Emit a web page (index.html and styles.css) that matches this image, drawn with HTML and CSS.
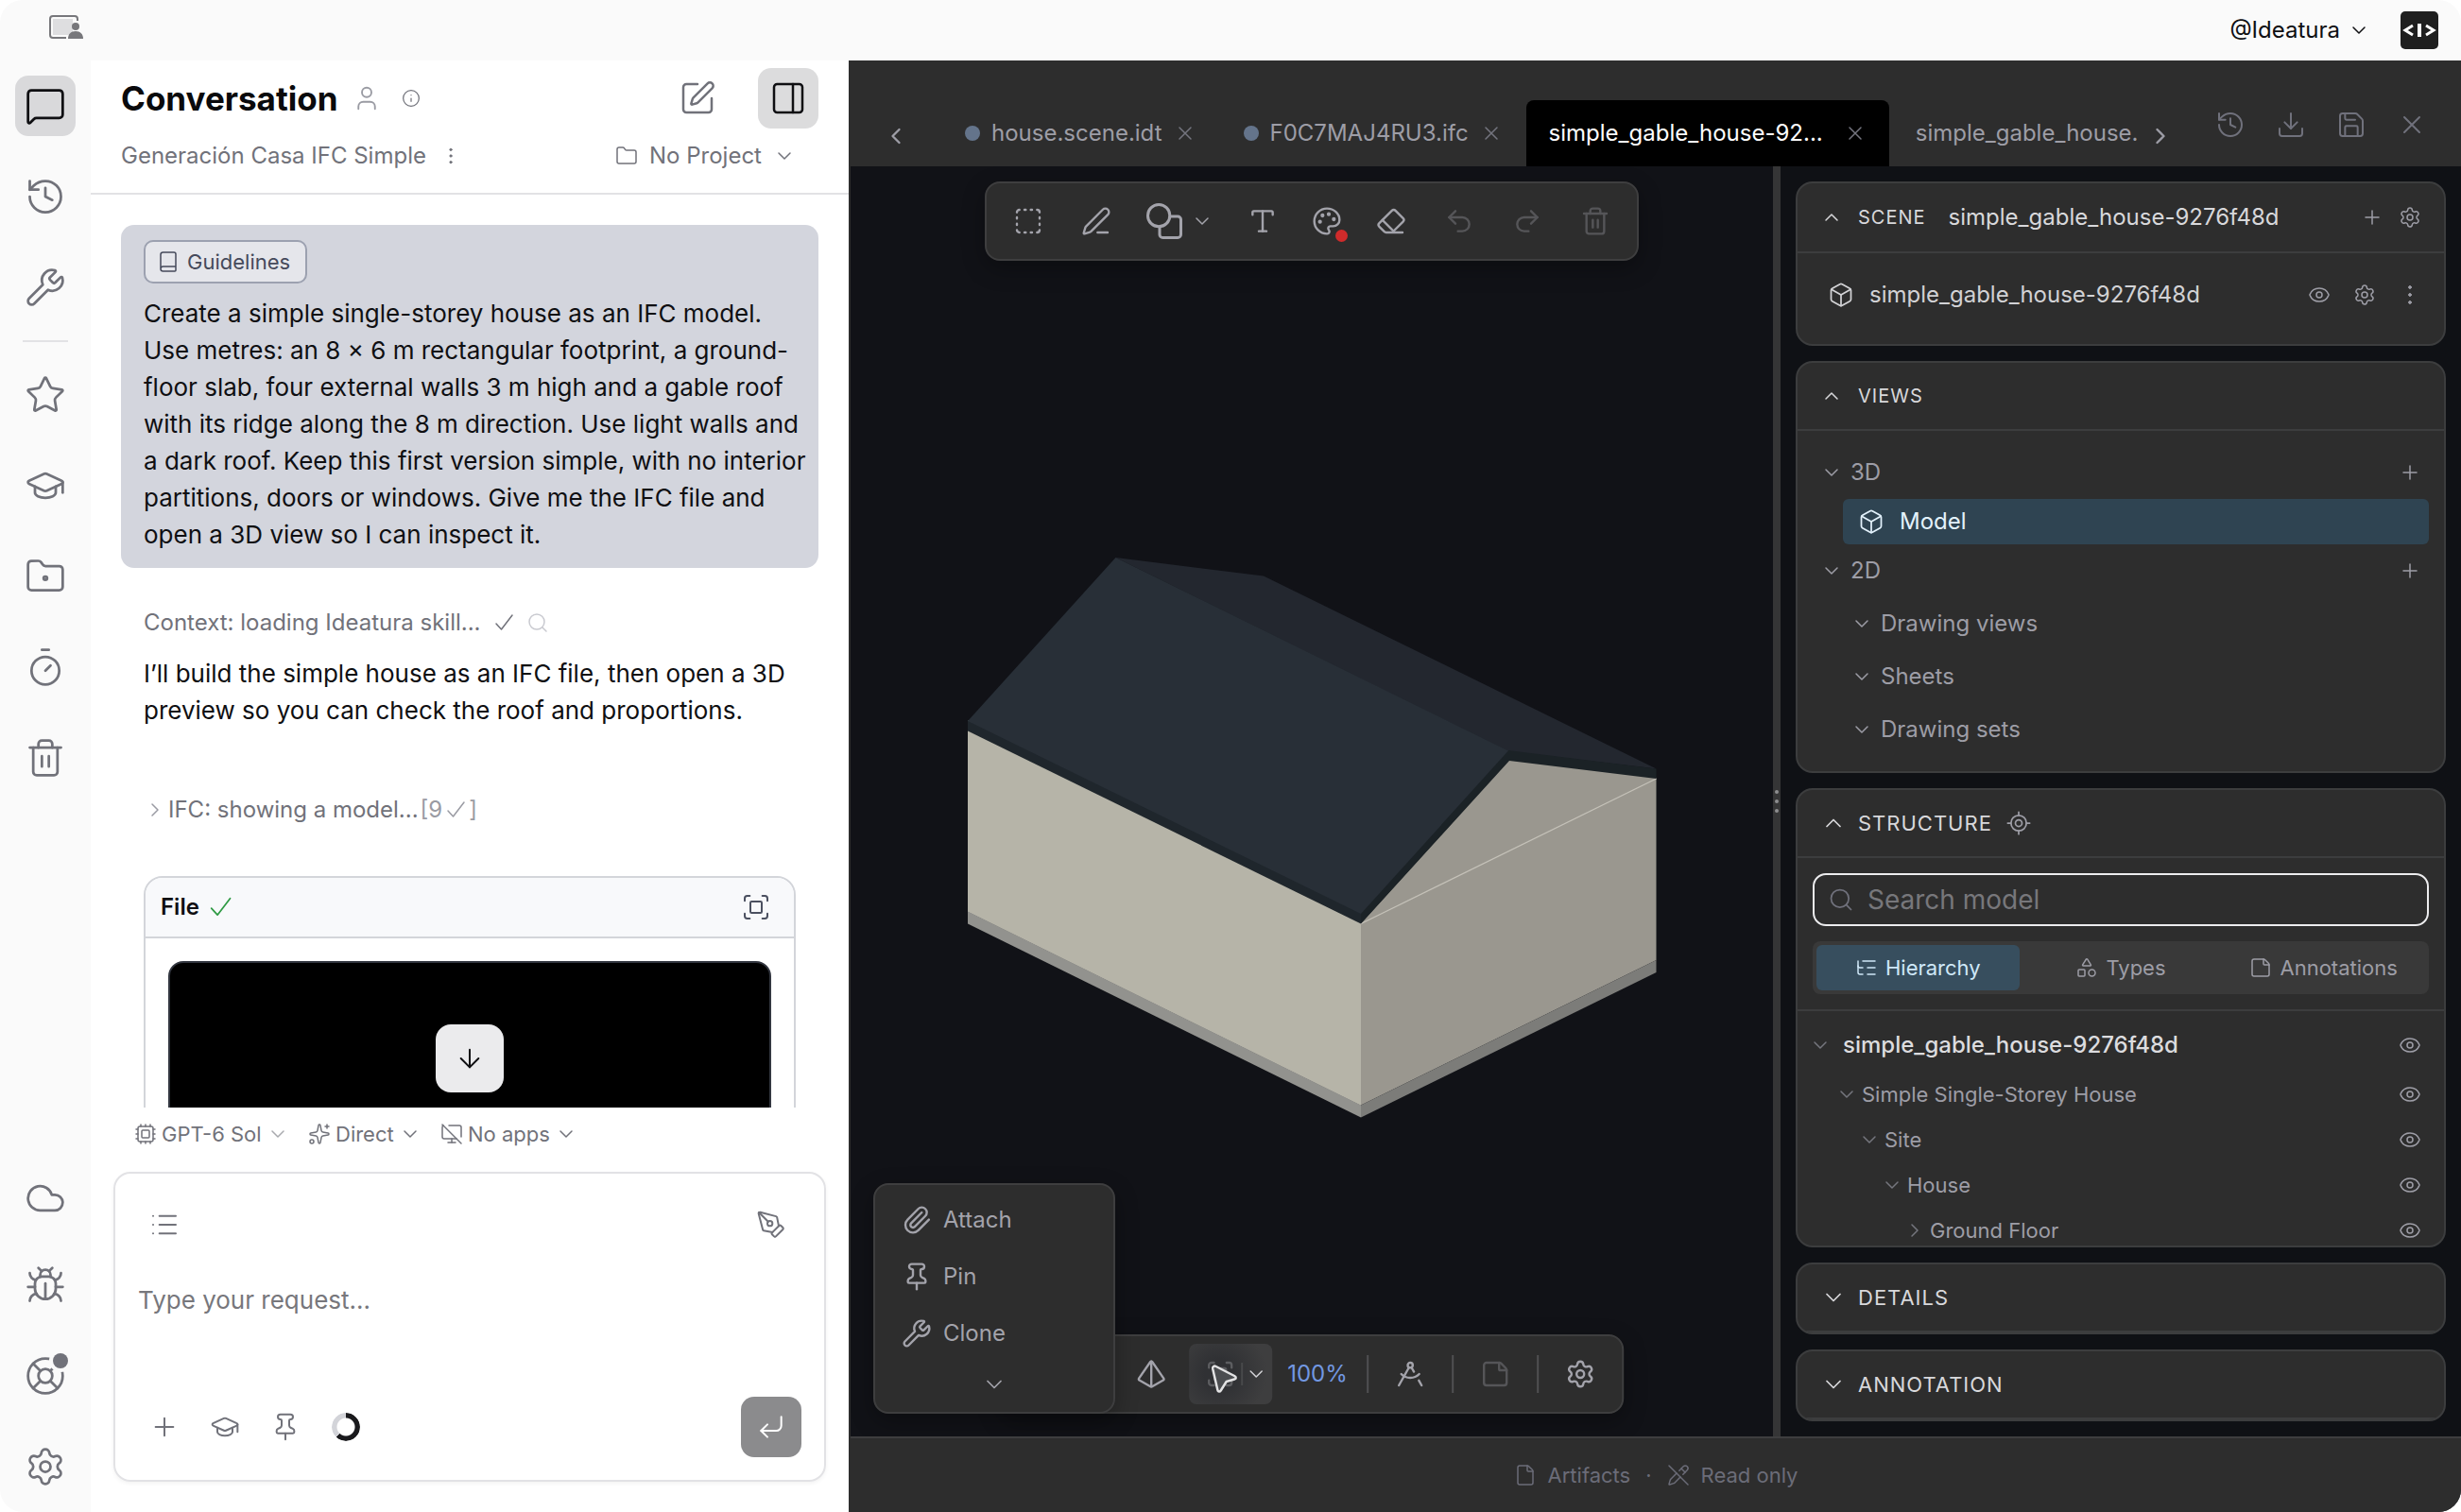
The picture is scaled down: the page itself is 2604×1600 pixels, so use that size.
FILE: index.html
```html
<!DOCTYPE html>
<html lang="en">
<head>
<meta charset="utf-8">
<meta name="viewport" content="width=device-width, initial-scale=1">
<title>Ideatura</title>
<link rel="stylesheet" href="styles.css">
</head>
<body>
<svg class="sprite" aria-hidden="true">
  <symbol id="message" viewBox="0 0 24 24"><path d="M22 17a2 2 0 0 1-2 2H6.828a2 2 0 0 0-1.414.586l-2.202 2.202A.71.71 0 0 1 2 21.286V5a2 2 0 0 1 2-2h16a2 2 0 0 1 2 2z"/></symbol>
  <symbol id="history" viewBox="0 0 24 24"><path d="M3 12a9 9 0 1 0 9-9 9.75 9.75 0 0 0-6.74 2.74L3 8"/><path d="M3 3v5h5"/><path d="M12 7v5l4 2"/></symbol>
  <symbol id="wrench" viewBox="0 0 24 24"><path d="M14.7 6.3a1 1 0 0 0 0 1.4l1.6 1.6a1 1 0 0 0 1.4 0l3.106-3.105c.32-.322.863-.22.983.218a6 6 0 0 1-8.259 7.057l-7.91 7.91a1 1 0 0 1-2.999-3l7.91-7.91a6 6 0 0 1 7.057-8.259c.438.12.54.662.219.984z"/></symbol>
  <symbol id="star" viewBox="0 0 24 24"><path d="M11.525 2.295a.53.53 0 0 1 .95 0l2.31 4.679a2.123 2.123 0 0 0 1.595 1.16l5.166.756a.53.53 0 0 1 .294.904l-3.736 3.638a2.123 2.123 0 0 0-.611 1.878l.882 5.14a.53.53 0 0 1-.771.56l-4.618-2.428a2.122 2.122 0 0 0-1.973 0L6.396 21.01a.53.53 0 0 1-.77-.56l.881-5.139a2.122 2.122 0 0 0-.611-1.879L2.16 9.795a.53.53 0 0 1 .294-.906l5.165-.755a2.122 2.122 0 0 0 1.597-1.16z"/></symbol>
  <symbol id="cap" viewBox="0 0 24 24"><path d="M21.42 10.922a1 1 0 0 0-.019-1.838L12.83 5.18a2 2 0 0 0-1.66 0L2.6 9.08a1 1 0 0 0 0 1.832l8.57 3.908a2 2 0 0 0 1.66 0z"/><path d="M22 10v6"/><path d="M6 12.5V16a6 3 0 0 0 12 0v-3.5"/></symbol>
  <symbol id="folder-dot" viewBox="0 0 24 24"><path d="M4 20h16a2 2 0 0 0 2-2V8a2 2 0 0 0-2-2h-7.93a2 2 0 0 1-1.66-.9l-.82-1.2A2 2 0 0 0 7.93 3H4a2 2 0 0 0-2 2v13c0 1.1.9 2 2 2Z"/><circle cx="12" cy="13" r="1"/></symbol>
  <symbol id="timer" viewBox="0 0 24 24"><path d="M10 2h4"/><path d="m12 14 3-3"/><circle cx="12" cy="14" r="8"/></symbol>
  <symbol id="trash" viewBox="0 0 24 24"><path d="M3 6h18"/><path d="M19 6v14a2 2 0 0 1-2 2H7a2 2 0 0 1-2-2V6"/><path d="M8 6V4a2 2 0 0 1 2-2h4a2 2 0 0 1 2 2v2"/><path d="M10 11v6M14 11v6"/></symbol>
  <symbol id="cloud" viewBox="0 0 24 24"><path d="M17.5 19H9a7 7 0 1 1 6.71-9h1.79a4.5 4.5 0 1 1 0 9Z"/></symbol>
  <symbol id="bug" viewBox="0 0 24 24"><path d="M12 20v-9"/><path d="M14 7a4 4 0 0 1 4 4v3a6 6 0 0 1-12 0v-3a4 4 0 0 1 4-4z"/><path d="M14.12 3.88 16 2"/><path d="M21 21a4 4 0 0 0-3.81-4"/><path d="M21 5a4 4 0 0 1-3.55 3.97"/><path d="M22 13h-4"/><path d="M3 21a4 4 0 0 1 3.81-4"/><path d="M3 5a4 4 0 0 0 3.55 3.97"/><path d="M6 13H2"/><path d="m8 2 1.88 1.88"/><path d="M9 7.13V6a3 3 0 1 1 6 0v1.13"/></symbol>
  <symbol id="buoy" viewBox="0 0 24 24"><circle cx="12" cy="12" r="10"/><path d="m4.93 4.93 4.24 4.24"/><path d="m14.83 9.17 4.24-4.24"/><path d="m14.83 14.83 4.24 4.24"/><path d="m9.17 14.83-4.24 4.24"/><circle cx="12" cy="12" r="4"/></symbol>
  <symbol id="gear" viewBox="0 0 24 24"><path d="M9.671 4.136a2.34 2.34 0 0 1 4.659 0 2.34 2.34 0 0 0 3.319 1.915 2.34 2.34 0 0 1 2.33 4.033 2.34 2.34 0 0 0 0 3.831 2.34 2.34 0 0 1-2.33 4.033 2.34 2.34 0 0 0-3.319 1.915 2.34 2.34 0 0 1-4.659 0 2.34 2.34 0 0 0-3.32-1.915 2.34 2.34 0 0 1-2.33-4.033 2.34 2.34 0 0 0 0-3.831A2.34 2.34 0 0 1 6.35 6.051a2.34 2.34 0 0 0 3.319-1.915"/><circle cx="12" cy="12" r="3"/></symbol>
  <symbol id="square-pen" viewBox="0 0 24 24"><path d="M12 3H5a2 2 0 0 0-2 2v14a2 2 0 0 0 2 2h14a2 2 0 0 0 2-2v-7"/><path d="M18.375 2.625a1 1 0 0 1 3 3l-9.013 9.014a2 2 0 0 1-.853.505l-2.873.84a.5.5 0 0 1-.62-.62l.84-2.873a2 2 0 0 1 .506-.852z"/></symbol>
  <symbol id="panel" viewBox="0 0 24 24"><rect x="3" y="3" width="18" height="18" rx="2"/><path d="M15 3v18"/></symbol>
  <symbol id="user" viewBox="0 0 24 24"><path d="M19 21v-2a4 4 0 0 0-4-4H9a4 4 0 0 0-4 4v2"/><circle cx="12" cy="7" r="4"/></symbol>
  <symbol id="info" viewBox="0 0 24 24"><circle cx="12" cy="12" r="10"/><path d="M12 16v-4M12 8h.01"/></symbol>
  <symbol id="dots" viewBox="0 0 24 24"><g fill="currentColor" stroke-width="1"><circle cx="12" cy="4" r="1.4"/><circle cx="12" cy="12" r="1.4"/><circle cx="12" cy="20" r="1.4"/></g></symbol>
  <symbol id="down" viewBox="0 0 24 24"><path d="m6 9 6 6 6-6"/></symbol>
  <symbol id="up" viewBox="0 0 24 24"><path d="m6 15 6-6 6 6"/></symbol>
  <symbol id="right" viewBox="0 0 24 24"><path d="m9 18 6-6-6-6"/></symbol>
  <symbol id="left" viewBox="0 0 24 24"><path d="m15 18-6-6 6-6"/></symbol>
  <symbol id="folder" viewBox="0 0 24 24"><path d="M20 20a2 2 0 0 0 2-2V8a2 2 0 0 0-2-2h-7.9a2 2 0 0 1-1.69-.9L9.6 3.9A2 2 0 0 0 7.93 3H4a2 2 0 0 0-2 2v13a2 2 0 0 0 2 2Z"/></symbol>
  <symbol id="book" viewBox="0 0 24 24"><path d="M4 19.5v-15A2.5 2.5 0 0 1 6.5 2H18a2 2 0 0 1 2 2v17a1 1 0 0 1-1 1H6.5a2.5 2.5 0 0 1 0-5H20"/></symbol>
  <symbol id="check" viewBox="0 0 24 24"><path d="M21 4 9.500 19 4 13"/></symbol>
  <symbol id="search" viewBox="0 0 24 24"><circle cx="11" cy="11" r="8"/><path d="m21 21-4.3-4.3"/></symbol>
  <symbol id="scan" viewBox="0 0 24 24"><path d="M3 7V5a2 2 0 0 1 2-2h2"/><path d="M17 3h2a2 2 0 0 1 2 2v2"/><path d="M21 17v2a2 2 0 0 1-2 2h-2"/><path d="M7 21H5a2 2 0 0 1-2-2v-2"/><rect x="7.500" y="7.500" width="9" height="9" rx="1"/></symbol>
  <symbol id="arrow-down" viewBox="0 0 24 24"><path d="M12 5v14"/><path d="m19 12-7 7-7-7"/></symbol>
  <symbol id="cpu" viewBox="0 0 24 24"><path d="M12 20v2M12 2v2M17 20v2M17 2v2M2 12h2M2 17h2M2 7h2M20 12h2M20 17h2M20 7h2M7 20v2M7 2v2"/><rect x="4" y="4" width="16" height="16" rx="2"/><rect x="8" y="8" width="8" height="8" rx="1"/></symbol>
  <symbol id="sparkles" viewBox="0 0 24 24"><path d="M11.017 2.814a1 1 0 0 1 1.966 0l1.051 5.558a2 2 0 0 0 1.594 1.594l5.558 1.051a1 1 0 0 1 0 1.966l-5.558 1.051a2 2 0 0 0-1.594 1.594l-1.051 5.558a1 1 0 0 1-1.966 0l-1.051-5.558a2 2 0 0 0-1.594-1.594l-5.558-1.051a1 1 0 0 1 0-1.966l5.558-1.051a2 2 0 0 0 1.594-1.594z"/><path d="M20 2v4M22 4h-4"/><circle cx="4" cy="20" r="2"/></symbol>
  <symbol id="monitor-off" viewBox="0 0 24 24"><path d="M17 17H4a2 2 0 0 1-2-2V5c0-1.500 1-2 1-2"/><path d="M22 15V5a2 2 0 0 0-2-2H9"/><path d="M8 21h8"/><path d="M12 17v4"/><path d="m2 2 20 20"/></symbol>
  <symbol id="list" viewBox="0 0 24 24"><path d="M3 5h.01M3 12h.01M3 19h.01M8 5h13M8 12h13M8 19h13"/></symbol>
  <symbol id="pen-tool" viewBox="0 0 24 24"><path d="M15.707 21.293a1 1 0 0 1-1.414 0l-1.586-1.586a1 1 0 0 1 0-1.414l5.586-5.586a1 1 0 0 1 1.414 0l1.586 1.586a1 1 0 0 1 0 1.414z"/><path d="m18 13-1.375-6.874a1 1 0 0 0-.746-.776L3.235 2.028a1 1 0 0 0-1.207 1.207L5.35 15.879a1 1 0 0 0 .776.746L13 18"/><path d="m2.300 2.300 7.286 7.286"/><circle cx="11" cy="11" r="2"/></symbol>
  <symbol id="plus" viewBox="0 0 24 24"><path d="M5 12h14M12 5v14"/></symbol>
  <symbol id="close" viewBox="0 0 24 24"><path d="M18 6 6 18M6 6l12 12"/></symbol>
  <symbol id="pin" viewBox="0 0 24 24"><path d="M12 17v5"/><path d="M9 10.760a2 2 0 0 1-1.110 1.790l-1.780.900A2 2 0 0 0 5 15.240V16a1 1 0 0 0 1 1h12a1 1 0 0 0 1-1v-.760a2 2 0 0 0-1.110-1.790l-1.780-.900A2 2 0 0 1 15 10.760V7a1 1 0 0 1 1-1 2 2 0 0 0 0-4H8a2 2 0 0 0 0 4 1 1 0 0 1 1 1z"/></symbol>
  <symbol id="enter" viewBox="0 0 24 24"><path d="M20 4v7a4 4 0 0 1-4 4H4"/><path d="m9 10-5 5 5 5"/></symbol>
  <symbol id="clip" viewBox="0 0 24 24"><path d="m16 6-8.414 8.586a2 2 0 0 0 2.829 2.829l8.414-8.586a4 4 0 1 0-5.657-5.657l-8.379 8.551a6 6 0 1 0 8.485 8.485l8.379-8.551"/></symbol>
  <symbol id="pyramid" viewBox="0 0 24 24"><path d="M2.500 16.880a1 1 0 0 1-.320-1.430l9-13.020a1 1 0 0 1 1.640 0l9 13.010a1 1 0 0 1-.320 1.440l-8.510 4.860a2 2 0 0 1-1.980 0Z"/><path d="M12 2v20"/></symbol>
  <symbol id="compass" viewBox="0 0 24 24"><path d="m12.990 6.740 1.930 3.440"/><path d="M19.136 12a10 10 0 0 1-14.271 0"/><path d="m21 21-2.160-3.840"/><path d="m3 21 8.020-14.260"/><circle cx="12" cy="5" r="2"/></symbol>
  <symbol id="note" viewBox="0 0 24 24"><path d="M21 9a2.400 2.400 0 0 0-.706-1.706l-3.588-3.588A2.400 2.400 0 0 0 15 3H5a2 2 0 0 0-2 2v14a2 2 0 0 0 2 2h14a2 2 0 0 0 2-2z"/><path d="M15 3v5a1 1 0 0 0 1 1h5"/></symbol>
  <symbol id="file" viewBox="0 0 24 24"><path d="M6 22a2 2 0 0 1-2-2V4a2 2 0 0 1 2-2h8a2.400 2.400 0 0 1 1.704.706l3.588 3.588A2.400 2.400 0 0 1 20 8v12a2 2 0 0 1-2 2z"/><path d="M14 2v5a1 1 0 0 0 1 1h5"/></symbol>
  <symbol id="box" viewBox="0 0 24 24"><path d="M21 8a2 2 0 0 0-1-1.730l-7-4a2 2 0 0 0-2 0l-7 4A2 2 0 0 0 3 8v8a2 2 0 0 0 1 1.730l7 4a2 2 0 0 0 2 0l7-4A2 2 0 0 0 21 16Z"/><path d="m3.300 7 8.700 5 8.700-5"/><path d="M12 22V12"/></symbol>
  <symbol id="eye" viewBox="0 0 24 24"><path d="M2.062 12.348a1 1 0 0 1 0-.696 10.750 10.750 0 0 1 19.876 0 1 1 0 0 1 0 .696 10.750 10.750 0 0 1-19.876 0"/><circle cx="12" cy="12" r="3"/></symbol>
  <symbol id="locate" viewBox="0 0 24 24"><path d="M2 12h3M19 12h3M12 2v3M12 19v3"/><circle cx="12" cy="12" r="7"/><circle cx="12" cy="12" r="3"/></symbol>
  <symbol id="tree" viewBox="0 0 24 24"><path d="M8 5h13M13 12h8M13 19h8"/><path d="M3 10a2 2 0 0 0 2 2h3"/><path d="M3 5v12a2 2 0 0 0 2 2h3"/></symbol>
  <symbol id="shapes" viewBox="0 0 24 24"><path d="M8.300 10a.700.700 0 0 1-.626-1.079L11.400 3a.700.700 0 0 1 1.198-.043L16.300 8.900a.700.700 0 0 1-.572 1.100Z"/><rect x="3" y="14" width="7" height="7" rx="1"/><circle cx="17.500" cy="17.500" r="3.500"/></symbol>
  <symbol id="pencil-off" viewBox="0 0 24 24"><path d="m10 10-6.157 6.162a2 2 0 0 0-.5.833l-1.322 4.360a.5.5 0 0 0 .622.624l4.358-1.323a2 2 0 0 0 .830-.5L14 13.982"/><path d="m12.829 7.172 4.359-4.346a1 1 0 1 1 3.986 3.986l-4.353 4.353"/><path d="m15 5 4 4"/><path d="m2 2 20 20"/></symbol>
  <symbol id="marquee" viewBox="0 0 24 24"><path d="M5 3a2 2 0 0 0-2 2M19 3a2 2 0 0 1 2 2M21 19a2 2 0 0 1-2 2M5 21a2 2 0 0 1-2-2M9 3h1M14 3h1M9 21h1M14 21h1M3 9v1M3 14v1M21 9v1M21 14v1"/></symbol>
  <symbol id="pen-line" viewBox="0 0 24 24"><path d="M13 21h8"/><path d="M21.174 6.812a1 1 0 0 0-3.986-3.987L3.842 16.174a2 2 0 0 0-.5.830l-1.321 4.352a.5.5 0 0 0 .623.622l4.353-1.320a2 2 0 0 0 .830-.497z"/></symbol>
  <symbol id="forms" viewBox="0 0 24 24"><circle cx="8.500" cy="8.500" r="7"/><path d="M15.500 9H20.500a2 2 0 0 1 2 2v9.500a2 2 0 0 1-2 2H11a2 2 0 0 1-2-2V15.500"/></symbol>
  <symbol id="type" viewBox="0 0 24 24"><path d="M12 4v16"/><path d="M4 7V5a1 1 0 0 1 1-1h14a1 1 0 0 1 1 1v2"/><path d="M9 20h6"/></symbol>
  <symbol id="palette" viewBox="0 0 24 24"><path d="M12 22a1 1 0 0 1 0-20 10 9 0 0 1 10 9 5 5 0 0 1-5 5h-2.250a1.750 1.750 0 0 0-1.400 2.800l.3.4a1.750 1.750 0 0 1-1.400 2.800z"/><g fill="currentColor"><circle cx="13.500" cy="6.500" r=".7"/><circle cx="17.500" cy="10.500" r=".7"/><circle cx="6.500" cy="12.500" r=".7"/><circle cx="8.500" cy="7.500" r=".7"/></g></symbol>
  <symbol id="eraser" viewBox="0 0 24 24"><path d="M21 21H8a2 2 0 0 1-1.420-.587l-3.994-3.999a2 2 0 0 1 0-2.828l10-10a2 2 0 0 1 2.829 0l5.999 6a2 2 0 0 1 0 2.828L12.834 21"/><path d="m5.082 11.090 8.828 8.828"/></symbol>
  <symbol id="undo" viewBox="0 0 24 24"><path d="M9 14 4 9l5-5"/><path d="M4 9h10.500a5.500 5.500 0 0 1 0 11H11"/></symbol>
  <symbol id="redo" viewBox="0 0 24 24"><path d="m15 14 5-5-5-5"/><path d="M20 9H9.500a5.500 5.500 0 0 0 0 11H13"/></symbol>
  <symbol id="download" viewBox="0 0 24 24"><path d="M12 15V3"/><path d="M21 15v4a2 2 0 0 1-2 2H5a2 2 0 0 1-2-2v-4"/><path d="m7 10 5 5 5-5"/></symbol>
  <symbol id="save" viewBox="0 0 24 24"><path d="M15.200 3a2 2 0 0 1 1.400.6l3.800 3.800a2 2 0 0 1 .6 1.400V19a2 2 0 0 1-2 2H5a2 2 0 0 1-2-2V5a2 2 0 0 1 2-2z"/><path d="M17 21v-7a1 1 0 0 0-1-1H8a1 1 0 0 0-1 1v7"/><path d="M7 3v4a1 1 0 0 0 1 1h7"/></symbol>
</svg>

<div class="app">
  <header class="topbar">
    <svg class="device" viewBox="0 0 36 26" aria-hidden="true">
      <rect x="4" y="4" width="21" height="17" fill="#dedee0"/>
      <path d="M30 6V4a3 3 0 0 0-3-3H4a3 3 0 0 0-3 3v17a3 3 0 0 0 3 3h14" fill="none" stroke="#77777b" stroke-width="2"/>
      <circle cx="28" cy="12" r="4" fill="#77777b"/>
      <path d="M20 25c0-5 3-8 8-8s8 3 8 8z" fill="#77777b"/>
    </svg>
    <div class="account">
      <button class="plain account-name" type="button">@Ideatura<svg class="icon i24"><use href="#down"/></svg></button>
      <a class="brand" href="#" aria-label="Ideatura home">
        <svg viewBox="0 0 40 40" aria-hidden="true"><path d="M13 15 5 20l8 5M27 15l8 5-8 5" fill="none" stroke="#fff" stroke-width="3"/><path d="M20 13v14" stroke="#fff" stroke-width="4"/></svg>
      </a>
    </div>
  </header>

  <nav class="rail" aria-label="Main">
    <div class="rail-group">
      <button class="rail-button is-active" type="button" aria-label="Conversation"><svg class="icon i44"><use href="#message"/></svg></button>
      <button class="rail-button" type="button" aria-label="History"><svg class="icon i44"><use href="#history"/></svg></button>
      <button class="rail-button" type="button" aria-label="Tools"><svg class="icon i44"><use href="#wrench"/></svg></button>
    </div>
    <hr class="rail-rule">
    <div class="rail-group">
      <button class="rail-button" type="button" aria-label="Favourites"><svg class="icon i44"><use href="#star"/></svg></button>
      <button class="rail-button" type="button" aria-label="Skills"><svg class="icon i44"><use href="#cap"/></svg></button>
      <button class="rail-button" type="button" aria-label="Projects"><svg class="icon i44"><use href="#folder-dot"/></svg></button>
      <button class="rail-button" type="button" aria-label="Schedules"><svg class="icon i44"><use href="#timer"/></svg></button>
      <button class="rail-button" type="button" aria-label="Bin"><svg class="icon i44"><use href="#trash"/></svg></button>
    </div>
    <div class="rail-group rail-end">
      <button class="rail-button rail-cloud" type="button" aria-label="Cloud"><svg class="icon i44"><use href="#cloud"/></svg></button>
      <button class="rail-button" type="button" aria-label="Report a bug"><svg class="icon i44"><use href="#bug"/></svg></button>
      <button class="rail-button" type="button" aria-label="Help"><svg class="icon i44"><use href="#buoy"/></svg><span class="badge"></span></button>
      <button class="rail-button" type="button" aria-label="Settings"><svg class="icon i44"><use href="#gear"/></svg></button>
    </div>
  </nav>

  <main class="chat">
    <header class="chat-head">
      <div class="chat-row">
        <h1 class="chat-title">Conversation</h1>
        <svg class="icon i30 user"><use href="#user"/></svg>
        <svg class="icon i20"><use href="#info"/></svg>
        <div class="chat-actions">
          <button class="square" type="button" aria-label="New conversation"><svg class="icon i40"><use href="#square-pen"/></svg></button>
          <button class="square is-active" type="button" aria-label="Toggle side panel"><svg class="icon i40"><use href="#panel"/></svg></button>
        </div>
      </div>
      <div class="chat-row chat-sub">
        <span>Generación Casa IFC Simple</span>
        <button class="plain" type="button" aria-label="Conversation options"><svg class="icon i20"><use href="#dots"/></svg></button>
        <label class="picker picker-project"><svg class="icon i24"><use href="#folder"/></svg>
          <select aria-label="Project"><option>No Project</option></select><svg class="icon i24"><use href="#down"/></svg></label>
      </div>
    </header>

    <div class="thread">
      <section class="bubble">
        <button class="chip" type="button"><svg class="icon i24"><use href="#book"/></svg>Guidelines</button>
        <p>Create a simple single-storey house as an IFC model.<br>Use metres: an 8 × 6 m rectangular footprint, a ground-floor slab, four external walls 3 m high and a gable roof with its ridge along the 8 m direction. Use light walls and a dark roof. Keep this first version simple, with no interior partitions, doors or windows. Give me the IFC file and open a 3D view so I can inspect it.</p>
      </section>
      <section class="reply">
        <div class="step"><span>Context: loading Ideatura skill...</span><svg class="icon i24"><use href="#check"/></svg><svg class="icon i24 faint"><use href="#search"/></svg></div>
        <p>I’ll build the simple house as an IFC file, then open a 3D preview so you can check the roof and proportions.</p>
        <button class="plain step step-more" type="button"><svg class="icon i24"><use href="#right"/></svg><span>IFC: showing a model...</span><span class="count">[9 <svg class="icon i24"><use href="#check"/></svg>]</span></button>
        <article class="card-file">
          <header class="card-file-head"><h2>File</h2><svg class="icon i28 ok"><use href="#check"/></svg>
            <button class="plain expand" type="button" aria-label="Full screen"><svg class="icon i32"><use href="#scan"/></svg></button></header>
          <div class="card-file-body"><div class="preview"></div></div>
        </article>
      </section>
      <button class="to-bottom" type="button" aria-label="Scroll to latest"><svg class="icon i32"><use href="#arrow-down"/></svg></button>
    </div>

    <div class="modes">
      <label class="picker"><svg class="icon i24"><use href="#cpu"/></svg><select aria-label="Model"><option>GPT-6 Sol</option></select><svg class="icon i24 dim"><use href="#down"/></svg></label>
      <label class="picker"><svg class="icon i24"><use href="#sparkles"/></svg><select aria-label="Mode"><option>Direct</option></select><svg class="icon i24"><use href="#down"/></svg></label>
      <label class="picker"><svg class="icon i24"><use href="#monitor-off"/></svg><select aria-label="Apps"><option>No apps</option></select><svg class="icon i24"><use href="#down"/></svg></label>
    </div>

    <form class="composer">
      <div class="composer-row">
        <button class="square" type="button" aria-label="Prompts"><svg class="icon i32"><use href="#list"/></svg></button>
        <button class="square push" type="button" aria-label="Sketch"><svg class="icon i32"><use href="#pen-tool"/></svg></button>
      </div>
      <textarea class="composer-text" aria-label="Request" placeholder="Type your request..."></textarea>
      <div class="composer-row">
        <button class="square" type="button" aria-label="Add"><svg class="icon i32"><use href="#plus"/></svg></button>
        <button class="square" type="button" aria-label="Skills"><svg class="icon i32"><use href="#cap"/></svg></button>
        <button class="square" type="button" aria-label="Pins"><svg class="icon i32"><use href="#pin"/></svg></button>
        <button class="square" type="button" aria-label="Context used"><span class="ring"></span></button>
        <button class="square send push" type="submit" aria-label="Send"><svg class="icon i32"><use href="#enter"/></svg></button>
      </div>
    </form>
  </main>

  <section class="workspace">
    <header class="tabs">
      <button class="plain tabs-arrow" type="button" aria-label="Previous tabs"><svg class="icon i28 bold"><use href="#left"/></svg></button>
      <div class="tab-strip">
        <div class="tab"><span class="dot"></span><span class="tab-name">house.scene.idt</span><button class="plain" type="button" aria-label="Close tab"><svg class="icon i24"><use href="#close"/></svg></button></div>
        <div class="tab"><span class="dot"></span><span class="tab-name">F0C7MAJ4RU3.ifc</span><button class="plain" type="button" aria-label="Close tab"><svg class="icon i24"><use href="#close"/></svg></button></div>
        <div class="tab is-active"><span class="tab-name">simple_gable_house-92...</span><button class="plain" type="button" aria-label="Close tab"><svg class="icon i24"><use href="#close"/></svg></button></div>
        <div class="tab tab-last"><span class="tab-name">simple_gable_house.</span></div>
      </div>
      <button class="plain tabs-arrow tabs-next" type="button" aria-label="Next tabs"><svg class="icon i28 bold"><use href="#right"/></svg></button>
      <div class="tab-tools">
        <button class="square" type="button" aria-label="Versions"><svg class="icon i32"><use href="#history"/></svg></button>
        <button class="square" type="button" aria-label="Download"><svg class="icon i32"><use href="#download"/></svg></button>
        <button class="square" type="button" aria-label="Save"><svg class="icon i32"><use href="#save"/></svg></button>
        <button class="square" type="button" aria-label="Close panel"><svg class="icon i32"><use href="#close"/></svg></button>
      </div>
    </header>

    <div class="stage">
      <svg class="model" viewBox="900 176 976 1344" role="img" aria-label="Gable house model">
        <path fill="#b6b4a8" d="M1024 762V965L1440 1170V970z"/>
        <path fill="#92928e" d="M1024 964.500V977.500L1440 1182.500V1169.500z"/>
        <path fill="#9a978f" d="M1440 977 1597 804 1752.500 823V1016L1440 1169.500z"/>
        <path fill="#7c7c79" d="M1440 1169.500V1182.500L1752.500 1029V1016z"/>
        <path d="M1440 977.500 1752.500 824" stroke="#c4c1b8" stroke-width="1.300" fill="none"/>
        <path fill="#23272f" d="M1180.500 590 1337 609.500 1752.500 813.500 1596 795z"/>
        <path fill="#1b2226" d="M1596 794 1752.500 813.500V824L1597 805 1440 977.500V966z"/>
        <path fill="#1f262c" d="M1024 762V773.500L1440 977.500V966z"/>
        <path fill="#282f37" d="M1180.500 590 1024 763 1440 967 1596 794.500z"/>
      </svg>

      <div class="toolbar toolbar-top" role="toolbar" aria-label="Markup">
        <button class="square" type="button" aria-label="Select"><svg class="icon i32"><use href="#marquee"/></svg></button>
        <button class="square" type="button" aria-label="Draw"><svg class="icon i32"><use href="#pen-line"/></svg></button>
        <button class="split" type="button" aria-label="Shapes"><svg class="icon i40"><use href="#forms"/></svg><svg class="icon i24"><use href="#down"/></svg></button>
        <button class="square" type="button" aria-label="Text"><svg class="icon i32"><use href="#type"/></svg></button>
        <button class="square swatch" type="button" aria-label="Colour"><svg class="icon i32"><use href="#palette"/></svg><span class="ink"></span></button>
        <button class="square" type="button" aria-label="Erase"><svg class="icon i32"><use href="#eraser"/></svg></button>
        <button class="square" type="button" aria-label="Undo" disabled><svg class="icon i32"><use href="#undo"/></svg></button>
        <button class="square" type="button" aria-label="Redo" disabled><svg class="icon i32"><use href="#redo"/></svg></button>
        <button class="square" type="button" aria-label="Delete" disabled><svg class="icon i32"><use href="#trash"/></svg></button>
      </div>

      <div class="toolbar toolbar-bottom" role="toolbar" aria-label="View">
        <button class="square" type="button" aria-label="Projection"><svg class="icon i32"><use href="#pyramid"/></svg></button>
        <button class="split is-hover" type="button" aria-label="Fit"><svg class="icon i32"><use href="#scan"/></svg><span class="split-rule"></span><svg class="icon i24 split-arrow"><use href="#down"/></svg>
          <svg class="cursor" viewBox="0 0 34 36" aria-hidden="true"><path d="M5 6.500C4.500 4 6.500 3 8.500 4L28 14c2 1 2 3 0 3.500L19.500 20 13.500 29.500c-1 1.500-3 1.200-3.300-.5z" fill="#4b4d50" stroke="#e2e2e3" stroke-width="2.500" stroke-linejoin="round"/></svg></button>
        <button class="plain zoom" type="button">100%</button>
        <span class="sep"></span>
        <button class="square" type="button" aria-label="Measure"><svg class="icon i32"><use href="#compass"/></svg></button>
        <span class="sep"></span>
        <button class="square" type="button" aria-label="Note" disabled><svg class="icon i32"><use href="#note"/></svg></button>
        <span class="sep"></span>
        <button class="square" type="button" aria-label="View settings"><svg class="icon i32"><use href="#gear"/></svg></button>
      </div>

      <div class="menu" role="menu">
        <button class="menu-item" type="button" role="menuitem"><svg class="icon i32"><use href="#clip"/></svg>Attach</button>
        <button class="menu-item" type="button" role="menuitem"><svg class="icon i32"><use href="#pin"/></svg>Pin</button>
        <button class="menu-item" type="button" role="menuitem"><svg class="icon i32"><use href="#wrench"/></svg>Clone</button>
        <button class="menu-more" type="button" aria-label="More"><svg class="icon i28"><use href="#down"/></svg></button>
      </div>
    </div>

    <div class="splitter" role="separator"><i></i><i></i><i></i></div>

    <aside class="inspector">
      <section class="panel">
        <header class="panel-head panel-head-tall"><svg class="icon i24"><use href="#up"/></svg><h3 class="small-title">SCENE</h3><span class="scene-name">simple_gable_house-9276f48d</span>
          <span class="row-tools"><button class="plain" type="button" aria-label="Add to scene"><svg class="icon i24"><use href="#plus"/></svg></button><button class="plain" type="button" aria-label="Scene settings"><svg class="icon i24"><use href="#gear"/></svg></button></span></header>
        <div class="scene-body">
          <div class="row"><svg class="icon i28"><use href="#box"/></svg><span class="scene-item">simple_gable_house-9276f48d</span>
            <span class="row-tools row-tools-wide"><button class="plain" type="button" aria-label="Visibility"><svg class="icon i24"><use href="#eye"/></svg></button><button class="plain" type="button" aria-label="Model settings"><svg class="icon i24"><use href="#gear"/></svg></button><button class="plain" type="button" aria-label="More"><svg class="icon i24"><use href="#dots"/></svg></button></span></div>
        </div>
      </section>

      <section class="panel">
        <header class="panel-head"><svg class="icon i24"><use href="#up"/></svg><h3 class="small-title">VIEWS</h3></header>
        <ul class="views">
          <li class="row"><svg class="icon i24"><use href="#down"/></svg><span>3D</span><button class="plain push" type="button" aria-label="Add 3D view"><svg class="icon i24"><use href="#plus"/></svg></button></li>
          <li class="row is-selected"><svg class="icon i28"><use href="#box"/></svg><span>Model</span></li>
          <li class="row"><svg class="icon i24"><use href="#down"/></svg><span>2D</span><button class="plain push" type="button" aria-label="Add 2D view"><svg class="icon i24"><use href="#plus"/></svg></button></li>
          <li class="row row-sub"><svg class="icon i24"><use href="#down"/></svg><span>Drawing views</span></li>
          <li class="row row-sub"><svg class="icon i24"><use href="#down"/></svg><span>Sheets</span></li>
          <li class="row row-sub"><svg class="icon i24"><use href="#down"/></svg><span>Drawing sets</span></li>
        </ul>
      </section>

      <section class="panel panel-grow">
        <header class="panel-head"><svg class="icon i28"><use href="#up"/></svg><h3>STRUCTURE</h3><button class="plain locate" type="button" aria-label="Locate selection"><svg class="icon i28"><use href="#locate"/></svg></button></header>
        <div class="structure-tools">
          <label class="search"><svg class="icon i28"><use href="#search"/></svg><input type="text" aria-label="Search model" placeholder="Search model"></label>
          <div class="segments" role="tablist">
            <button class="segment is-active" type="button" role="tab"><svg class="icon i24"><use href="#tree"/></svg>Hierarchy</button>
            <button class="segment" type="button" role="tab"><svg class="icon i24"><use href="#shapes"/></svg>Types</button>
            <button class="segment" type="button" role="tab"><svg class="icon i24"><use href="#note"/></svg>Annotations</button>
          </div>
        </div>
        <ul class="tree">
          <li class="node node-root"><svg class="icon i24"><use href="#down"/></svg><span>simple_gable_house-9276f48d</span><button class="plain push" type="button" aria-label="Visibility"><svg class="icon i24"><use href="#eye"/></svg></button></li>
          <li class="node level-1"><svg class="icon i24"><use href="#down"/></svg><span>Simple Single-Storey House</span><button class="plain push" type="button" aria-label="Visibility"><svg class="icon i24"><use href="#eye"/></svg></button></li>
          <li class="node level-2"><svg class="icon i24"><use href="#down"/></svg><span>Site</span><button class="plain push" type="button" aria-label="Visibility"><svg class="icon i24"><use href="#eye"/></svg></button></li>
          <li class="node level-3"><svg class="icon i24"><use href="#down"/></svg><span>House</span><button class="plain push" type="button" aria-label="Visibility"><svg class="icon i24"><use href="#eye"/></svg></button></li>
          <li class="node level-4"><svg class="icon i24"><use href="#right"/></svg><span>Ground Floor</span><button class="plain push" type="button" aria-label="Visibility"><svg class="icon i24"><use href="#eye"/></svg></button></li>
        </ul>
      </section>

      <section class="panel"><header class="panel-head"><svg class="icon i28"><use href="#down"/></svg><h3>DETAILS</h3></header></section>
      <section class="panel"><header class="panel-head"><svg class="icon i28"><use href="#down"/></svg><h3>ANNOTATION</h3></header></section>
    </aside>

    <footer class="status">
      <span class="status-item"><svg class="icon i24"><use href="#file"/></svg>Artifacts</span>
      <span>·</span>
      <span class="status-item"><svg class="icon i24"><use href="#pencil-off"/></svg>Read only</span>
    </footer>
  </section>
</div>
</body>
</html>
```
FILE: styles.css
```css
* { box-sizing: border-box; }

body {
  margin: 0;
  background: #fff;
  color: #0f0f12;
  font: 24px/36px Inter, "Liberation Sans", sans-serif;
}

h1, h2, h3, p, ul { margin: 0; padding: 0; }
ul { list-style: none; }

button, select, input, textarea {
  margin: 0;
  padding: 0;
  border: 0;
  background: none;
  color: inherit;
  font: inherit;
}

.sprite { display: none; }

.icon {
  flex: none;
  display: block;
  fill: none;
  stroke: currentColor;
  stroke-width: 1.5;
  stroke-linecap: round;
  stroke-linejoin: round;
}
.i20 { width: 20px; height: 20px; }
.i24 { width: 24px; height: 24px; }
.i28 { width: 28px; height: 28px; }
.i30 { width: 30px; height: 30px; }
.i32 { width: 32px; height: 32px; }
.i40 { width: 40px; height: 40px; }
.i44 { width: 44px; height: 44px; }
.bold { stroke-width: 2; }

.plain { display: flex; align-items: center; }
.push { margin-left: auto; }

.square {
  display: flex;
  align-items: center;
  justify-content: center;
  width: 64px;
  height: 64px;
  border-radius: 14px;
}

/* App frame */
.app {
  display: grid;
  grid-template: 64px minmax(0, 1fr) / 96px minmax(0, 67fr) minmax(0, 142fr);
  height: 100vh;
  border-radius: 24px;
  overflow: hidden;
  background: #fafafa;
}

.topbar {
  grid-column: 1 / -1;
  display: flex;
  align-items: center;
  justify-content: space-between;
  padding: 0 24px 0 52px;
}
.device { width: 36px; height: 26px; margin-bottom: 6px; }
.account { display: flex; align-items: center; gap: 32px; }
.account-name { gap: 8px; }
.brand { width: 40px; height: 40px; border-radius: 5px; background: #1f1f1f; }
.brand svg { display: block; }

/* Rail */
.rail {
  display: flex;
  flex-direction: column;
  align-items: center;
  gap: 24px;
  padding: 16px 0;
  color: #71727a;
}
.rail-group { display: flex; flex-direction: column; gap: 32px; }
.rail-end { margin-top: auto; }
.rail-button {
  position: relative;
  display: flex;
  align-items: center;
  justify-content: center;
  width: 64px;
  height: 64px;
  border-radius: 14px;
}
.rail-button.is-active { background: #d9d9db; color: #0f0f12; }
.rail-cloud { margin-bottom: -4px; }
.rail-rule { width: 48px; height: 2px; margin: 0; border: 0; background: #e2e2e5; }
.badge {
  position: absolute;
  top: 8px;
  right: 8px;
  width: 16px;
  height: 16px;
  border-radius: 50%;
  background: #71727a;
  box-shadow: 0 0 0 4px #fafafa;
}

/* Chat */
.chat {
  display: flex;
  flex-direction: column;
  min-width: 0;
  min-height: 0;
  border-right: 2px solid #2d2d2d;
  background: #fff;
}
.chat-head { padding: 8px 32px 22px; border-bottom: 2px solid #e2e2e5; color: #71727a; }
.chat-row { display: flex; align-items: center; }
.chat-title { margin-right: 16px; color: #0a0a0c; font-size: 35px; font-weight: 700; line-height: 44px; }
.user { margin-right: 22px; color: #9a9ba3; }
.chat-actions { display: flex; gap: 32px; margin-left: auto; }
.chat-actions .is-active { background: #dcdcdd; color: #0f0f12; }
.chat-sub { gap: 16px; height: 34px; margin-top: 12px; }

.picker { display: flex; align-items: center; gap: 5px; color: #71727a; }
.picker select { appearance: none; height: 36px; }
.picker-project { gap: 12px; margin-left: auto; padding-right: 24px; }

.thread { position: relative; flex: 1; min-height: 0; overflow: hidden; padding: 32px 32px 0; }
.thread p { font-size: 26px; line-height: 39px; }
.bubble { padding: 16px 8px 16px 24px; border-radius: 14px; background: #d3d5dd; }
.chip {
  display: flex;
  align-items: center;
  gap: 8px;
  height: 46px;
  margin-bottom: 12px;
  padding: 0 16px 0 12px;
  border: 2px solid #9ca1b0;
  border-radius: 10px;
  background: #e5e6eb;
  color: #454a5b;
  font-size: 22px;
}
.reply { padding: 40px 24px 0; }
.step { display: flex; align-items: center; gap: 12px; margin-bottom: 16px; color: #71727a; line-height: 36px; }
.faint { color: #c9cad0; }
.step-more { gap: 2px; margin: 68px 0 52px; }
.step-more .icon { color: #9a9ba3; }
.count { display: flex; align-items: center; gap: 2px; color: #9a9ba3; }

.card-file { border: 2px solid #d3d5da; border-radius: 20px 20px 0 0; }
.card-file-head {
  display: flex;
  align-items: center;
  gap: 8px;
  height: 64px;
  padding: 0 24px 0 16px;
  border-bottom: 2px solid #d3d5da;
  border-radius: 18px 18px 0 0;
  background: #f8f9fb;
}
.card-file-head h2 { font-size: 24px; font-weight: 600; }
.ok { color: #2f9a44; }
.expand { margin-left: auto; color: #4b5060; }
.card-file-body { padding: 24px; }
.preview { height: 400px; border: 2px solid #32363f; border-radius: 16px; background: #000; }
.to-bottom {
  position: absolute;
  bottom: 16px;
  left: calc(50% - 36px);
  display: flex;
  align-items: center;
  justify-content: center;
  width: 72px;
  height: 72px;
  border-radius: 16px;
  background: #ebebed;
}

.modes { display: flex; gap: 20px; padding: 10px 46px 22px; font-size: 22px; }
.dim { opacity: .6; }

.composer {
  display: flex;
  flex-direction: column;
  height: 328px;
  margin: 0 24px 32px;
  padding: 22px 24px 24px 20px;
  border: 2px solid #e2e2e5;
  border-radius: 18px;
  box-shadow: 0 2px 4px rgba(0, 0, 0, .05);
  color: #71727a;
}
.composer-row { display: flex; }
.composer-text { flex: 1; min-height: 0; padding: 28px 4px 0; resize: none; outline: 0; color: #0f0f12; font-size: 26px; line-height: 39px; }
.composer-text::placeholder { color: #77777c; }
.ring {
  width: 30px;
  height: 30px;
  border-radius: 50%;
  background: conic-gradient(#1a1a1d 0 62%, #d3d4d9 62% 100%);
  mask: radial-gradient(circle, transparent 9px, #000 10px);
}
.send { background: #8b8b8d; color: #fff; }

/* Workspace */
.workspace {
  display: grid;
  grid-template: 112px minmax(0, 1fr) 80px / minmax(0, 61fr) 8px minmax(0, 45fr);
  min-width: 0;
  min-height: 0;
  background: #0f1115;
  color: #9d9da6;
}

.tabs { grid-column: 1 / -1; display: flex; align-items: flex-end; background: #2d2d2d; }
.tabs-arrow { flex: none; height: 64px; padding: 0 12px; margin: 0 22px; color: #9d9da6; }
.tabs-next { padding: 0 12px 0 4px; margin: 0 16px 0 0; }
.tab-strip { display: flex; flex: 1; min-width: 0; overflow: hidden; }
.tab { flex: none; display: flex; align-items: center; height: 70px; padding: 0 25px; gap: 12px; }
.tab .icon { color: #74757f; }
.tab.is-active { gap: 22px; padding: 0 24px; border-radius: 8px 8px 0 0; background: #000; color: #fff; }
.tab-last { padding: 0 0 0 28px; }
.dot { width: 16px; height: 16px; border-radius: 50%; background: #64748b; }
.tab-tools { display: flex; align-self: flex-start; padding: 36px 20px 0 0; color: #70717c; }

.stage { position: relative; min-width: 0; overflow: hidden; background: #111217; }
.model { display: block; width: 100%; height: 100%; }

.toolbar, .menu {
  position: absolute;
  border: 2px solid #3e3e3f;
  border-radius: 16px;
  background: #2d2d2d;
  color: #a3a3ab;
  box-shadow: 0 8px 24px rgba(0, 0, 0, .3);
}
.toolbar { left: 50%; display: flex; align-items: center; height: 84px; transform: translateX(-50%); }
.toolbar .i32, .toolbar .i40, .menu .i32 { stroke-width: 1.8; }
.toolbar [disabled] { color: #555558; }
.toolbar-top { top: 16px; gap: 8px; padding: 0 12px; }
.toolbar-bottom { bottom: 24px; padding: 0 12px 0 126px; }
.split { position: relative; display: flex; align-items: center; gap: 8px; width: 96px; height: 64px; padding-left: 12px; border-radius: 8px; }
.swatch { position: relative; width: 56px; }
.ink { position: absolute; right: 6px; bottom: 10px; width: 13px; height: 13px; border-radius: 50%; background: #cf2b2b; }
.is-hover { gap: 0; width: 88px; margin: 0 16px 0 8px; padding-left: 17px; background: radial-gradient(circle at 32px 32px, #303134 16px, #3e3e3f 50px); color: #5c5d60; }
.split-rule { width: 2px; height: 24px; margin: 0 2px 0 6px; background: #48494b; }
.split-arrow { color: #d2d2d6; }
.cursor { position: absolute; top: 20px; left: 20px; width: 34px; height: 36px; }
.zoom { color: #7298e2; }
.sep { width: 2px; height: 40px; margin: 0 12px; background: #505052; }
.zoom + .sep { margin-left: 20px; }

.menu { bottom: 24px; left: 24px; width: 256px; padding: 7px 0 5px; }
.menu-item { display: flex; align-items: center; gap: 12px; width: 100%; height: 60px; padding-left: 28px; }
.menu-more { display: flex; align-items: center; justify-content: center; width: 100%; height: 48px; }

.splitter {
  display: flex;
  flex-direction: column;
  align-items: center;
  justify-content: center;
  gap: 6px;
  background: #353536;
}
.splitter i { width: 4px; height: 4px; border-radius: 50%; background: #8d8d8f; }

/* Inspector */
.inspector { display: flex; flex-direction: column; gap: 16px; min-width: 0; min-height: 0; padding: 16px; }
.panel { flex: none; overflow: hidden; border: 2px solid #3c3d3e; border-radius: 18px; background: #2d2d2d; }
.panel-grow { flex: 1; display: flex; flex-direction: column; min-height: 0; }
.panel-head { flex: none; display: flex; align-items: center; height: 72px; padding: 0 24px; border-bottom: 2px solid #3c3d3e; color: #d8d8db; }
.panel-head > .i24 { margin-right: 16px; }
.panel-head > .i28 { margin-right: 12px; }
.panel-head h3 { font-size: 22px; font-weight: 400; letter-spacing: 1px; }
.panel-head .small-title { font-size: 20px; }
.panel-head-tall { height: 74px; }
.scene-name { margin-left: 24px; }
.row-tools { display: flex; gap: 16px; margin-left: auto; color: #9d9da6; }
.row-tools-wide { gap: 24px; align-items: center; }
.scene-body { padding: 16px 24px 24px 32px; color: #d2d2d5; }
.row { display: flex; align-items: center; gap: 8px; height: 56px; }
.scene-item { margin-left: 8px; }

.views { padding: 16px 16px 16px 24px; }
.views .push { padding-right: 8px; }
.views .is-selected { gap: 16px; height: 48px; margin-left: 24px; padding-left: 16px; border-radius: 6px; background: #2f4452; color: #e3f2fc; }
.row-sub { padding-left: 32px; }

.locate { margin-left: 14px; color: #9d9da6; }
.structure-tools { flex: none; padding: 16px; border-bottom: 2px solid #3c3d3e; }
.search { display: flex; align-items: center; gap: 14px; height: 56px; margin-bottom: 16px; padding: 0 16px 0 14px; border: 2px solid #ececee; border-radius: 14px; color: #70717c; }
.search input { flex: 1; min-width: 0; outline: 0; font-size: 28px; }
.search input::placeholder { color: #77777b; }
.segments { display: grid; grid-template-columns: repeat(3, 1fr); padding: 4px; border-radius: 8px; background: #393939; }
.segment { display: flex; align-items: center; justify-content: center; gap: 8px; height: 48px; border-radius: 6px; font-size: 22px; }
.segment.is-active { background: #374e5e; color: #cfe8f8; }

.tree { flex: 1; min-height: 0; overflow: hidden; padding: 8px 24px 0 12px; }
.node { display: flex; align-items: center; gap: 4px; height: 48px; font-size: 22px; }
.node > .icon { color: #75767e; }
.node-root { gap: 12px; height: 56px; color: #dcdcdf; font-size: 24px; font-weight: 500; }
.node .push { color: #9d9da6; }
.level-1 { padding-left: 28px; }
.level-2 { padding-left: 52px; }
.level-3 { padding-left: 76px; }
.level-4 { padding-left: 100px; }

.status {
  grid-column: 1 / -1;
  display: flex;
  align-items: center;
  justify-content: center;
  gap: 16px;
  border-top: 2px solid #3e3e3f;
  background: #2d2d2d;
  color: #6b6c78;
  font-size: 22px;
}
.status-item { display: flex; align-items: center; gap: 12px; }
```
